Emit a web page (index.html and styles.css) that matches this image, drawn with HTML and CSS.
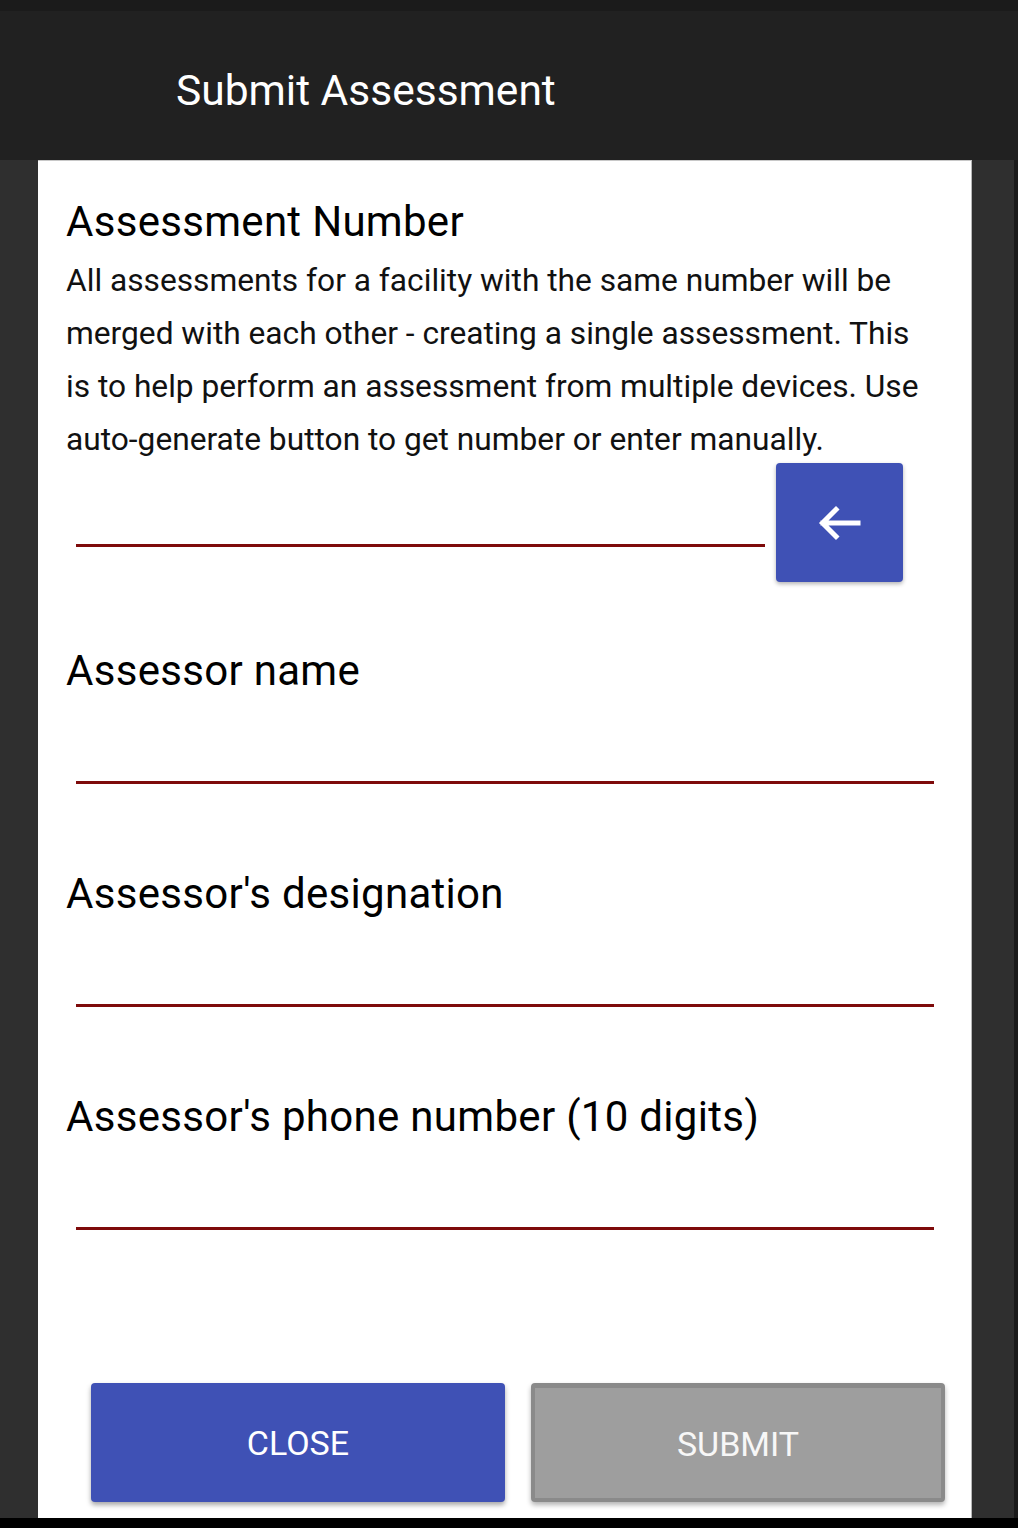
FILE: index.html
```html
<!DOCTYPE html>
<html lang="en">
<head>
<meta charset="utf-8">
<title>Submit Assessment</title>
<link rel="stylesheet" href="styles.css">
</head>
<body>
<div class="topbar"></div>
<header class="appbar"><h1 class="title">Submit Assessment</h1></header>
<div class="main">
  <div class="gutter-l"></div>
  <section class="card">
    <h2 class="label">Assessment Number</h2>
    <p class="desc">All assessments for a facility with the same number will be merged with each other - creating a single assessment. This is to help perform an assessment from multiple devices. Use auto-generate button to get number or enter manually.</p>
    <div class="number-row">
      <div class="field field-short"></div>
      <button class="gen-btn" type="button" aria-label="Auto-generate">
        <svg width="48" height="42" viewBox="0 0 48 42" aria-hidden="true">
          <path d="M42 21H7M20 7.5L6.5 21L20 34.5" fill="none" stroke="#fff" stroke-width="5" stroke-linecap="square"/>
        </svg>
      </button>
    </div>
    <h2 class="label sec">Assessor name</h2>
    <div class="field field-long"></div>
    <h2 class="label sec2">Assessor's designation</h2>
    <div class="field field-long"></div>
    <h2 class="label sec2">Assessor's phone number (10 digits)</h2>
    <div class="field field-long"></div>
    <div class="actions">
      <button class="btn btn-close" type="button">CLOSE</button>
      <button class="btn btn-submit" type="button">SUBMIT</button>
    </div>
  </section>
  <div class="gutter-r"></div>
  <div class="edge"></div>
</div>
<div class="bottombar"></div>
</body>
</html>
```
FILE: styles.css
```css
html, body {
  margin: 0;
  padding: 0;
}
body {
  width: 1018px;
  height: 1528px;
  overflow: hidden;
  background: #2f2f2f;
  font-family: Roboto, "Noto Sans", "Liberation Sans", sans-serif;
  display: flex;
  flex-direction: column;
}
.topbar {
  height: 11px;
  background: #1b1b1b;
  flex: none;
}
.appbar {
  height: 149px;
  flex: none;
  background: #212121;
  box-sizing: border-box;
  padding: 56px 0 0 176px;
}
.title {
  margin: 0;
  color: #ffffff;
  font-size: 42.5px;
  line-height: 47px;
  font-weight: 400;
}
.main {
  flex: 1;
  display: flex;
  min-height: 0;
}
.gutter-l {
  width: 38px;
  flex: none;
}
.card {
  width: 934px;
  flex: none;
  box-sizing: border-box;
  background: #ffffff;
  border-top: 1px solid #c8c8c8;
  border-right: 1px solid #b8b8b8;
  padding: 39px 30px 0 28px;
  display: flex;
  flex-direction: column;
}
.gutter-r {
  width: 42px;
  flex: none;
}
.edge {
  width: 4px;
  flex: none;
  background: #1b1b1b;
}
.bottombar {
  height: 10px;
  flex: none;
  background: #000000;
}
.label {
  margin: 0;
  font-size: 42px;
  letter-spacing: 0.3px;
  line-height: 44px;
  font-weight: 400;
  color: #000000;
}
.label.sec {
  margin-top: 67px;
}
.label.sec2 {
  margin-top: 88px;
}
.desc {
  margin: 10px 10px 0 0;
  font-size: 31.7px;
  line-height: 53px;
  color: #111111;
}
.number-row {
  margin: -3px 38px 0 10px;
  display: flex;
  align-items: flex-start;
  gap: 11px;
}
.field {
  box-sizing: border-box;
  border-bottom: 3px solid #7e0a0a;
}
.field-short {
  flex: 1;
  height: 84px;
}
.field-long {
  height: 91px;
  margin: 0 7px 0 10px;
}
.gen-btn {
  width: 127px;
  height: 119px;
  flex: none;
  border: 0;
  padding: 0;
  border-radius: 4px;
  background: #3f51b5;
  box-shadow: 0 2px 4px rgba(0, 0, 0, 0.3);
  display: flex;
  align-items: center;
  justify-content: center;
}
.actions {
  margin: 153px -4px 0 25px;
  display: flex;
  gap: 26px;
}
.btn {
  width: 414px;
  height: 119px;
  flex: none;
  box-sizing: border-box;
  border-radius: 4px;
  font-family: Roboto, "Noto Sans", "Liberation Sans", sans-serif;
  font-size: 34px;
  color: #ffffff;
  padding: 1px 0 0;
  display: flex;
  align-items: center;
  justify-content: center;
}
.btn-close {
  border: 0;
  background: #3f51b5;
  box-shadow: 0 3px 5px rgba(0, 0, 0, 0.35);
}
.btn-submit {
  background: #9e9e9e;
  color: #f7f7f7;
  border-style: solid;
  border-color: #8a8a8a;
  border-width: 5px 4px 4px 4px;
  box-shadow: 0 3px 5px rgba(0, 0, 0, 0.3);
}
```
